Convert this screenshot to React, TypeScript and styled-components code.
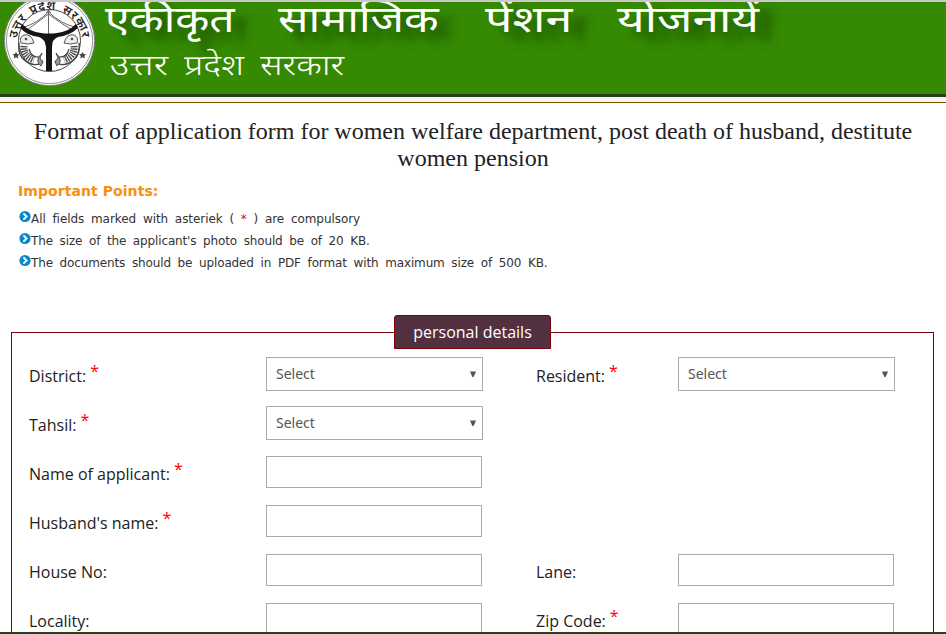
import React from 'react';
import styled, { createGlobalStyle } from 'styled-components';

const GlobalStyle = createGlobalStyle`
  * { box-sizing: border-box; }
  html, body { margin: 0; background: #fff; overflow: hidden; }
`;

const Page = styled.div`
  display: flex;
  flex-direction: column;
  width: 946px;
  height: 634px;
  overflow: hidden;
  background: #fff;
  border-bottom: 2px solid #26401c;
`;

const Header = styled.header`
  display: flex;
  flex: none;
  height: 97px;
  overflow: hidden;
  background: #358a02;
  border-top: 2px solid #cbc8cb;
  border-bottom: 3px solid #26401c;
`;

const Divider = styled.div`
  flex: none;
  height: 6px;
  background: #f8f5ee;
  border-bottom: 1px solid #765800;
`;

const Emblem = styled.svg`
  flex: none;
  width: 100px;
  height: 92px;
`;

const Brand = styled.div`
  display: flex;
  flex-direction: column;
  color: #fff;
  font-family: 'Noto Sans Devanagari', 'Noto Sans', 'Lohit Devanagari', sans-serif;
  white-space: nowrap;
`;

const BrandTitle = styled.div`
  display: flex;
  height: 44px;
  padding-left: 5px;
  font-size: 37px;
  line-height: 43px;
  text-shadow: 11px 10px 8px rgba(18, 60, 0, 0.75);
`;

const Word = styled.span<{ $w: number; $sx: number }>`
  flex: none;
  width: ${(p) => p.$w}px;
  transform: scaleX(${(p) => p.$sx});
  transform-origin: 0 50%;
`;

const BrandSub = styled.div`
  display: flex;
  padding-left: 10px;
  font-size: 28px;
  font-weight: 300;
  line-height: 44px;
`;

const Title = styled.h1`
  flex: none;
  margin: 15px 0 0;
  padding: 0 20px;
  font: 400 24px/27px 'Liberation Serif', serif;
  color: #222;
  text-align: center;
`;

const Notes = styled.section`
  flex: none;
  height: 143px;
  padding: 9px 0 0 18px;
  font-family: 'DejaVu Sans', sans-serif;
  color: #333;
`;

const NotesTitle = styled.h2`
  margin: 0 0 7px;
  font-size: 14px;
  line-height: 20px;
  font-weight: 700;
  letter-spacing: 0.07px;
  color: #f7900f;
`;

const Note = styled.div<{ $ls: number }>`
  display: flex;
  height: 22px;
  font-size: 12px;
  line-height: 22px;
  word-spacing: 3px;
  letter-spacing: ${(p) => p.$ls}px;
  white-space: pre;
`;

const Bullet = styled.svg`
  flex: none;
  width: 13px;
  height: 13px;
  margin-top: 2px;
`;

const Red = styled.span`
  color: #f00;
`;

const Panel = styled.fieldset`
  flex: none;
  width: 923px;
  height: 340px;
  margin: 0 0 0 11px;
  padding: 8px 17px 0;
  border: 1px solid #7a0006;
  font-family: 'Open Sans', sans-serif;
`;

const Legend = styled.legend`
  width: 157px;
  height: 34px;
  margin: 0 auto;
  padding: 0;
  background: #53303f;
  border: 1px solid #7a0006;
  border-radius: 3px 3px 0 0;
  color: #fff;
  font-size: 16px;
  line-height: 32px;
  text-align: center;
`;

const FormRow = styled.div`
  display: grid;
  grid-template-columns: 237px 270px 142px 217px;
  height: 49px;
`;

const Label = styled.label`
  padding-top: 8px;
  font-size: 16px;
  line-height: 22px;
  color: #222;
  white-space: nowrap;
`;

const Star = styled.sup`
  margin-left: 4px;
  font-size: 16px;
  line-height: 0;
  vertical-align: 5px;
  color: #f00;
`;

const Select = styled.div`
  display: flex;
  justify-content: space-between;
  align-items: center;
  width: 217px;
  height: 34px;
  padding: 0 6px 1px 9px;
  border: 1px solid #aaa;
  color: #555;
  font: 14px 'Noto Sans', sans-serif;
`;

const Arrow = styled.svg`
  width: 6px;
  height: 6px;
`;

const Input = styled.input`
  width: 216px;
  height: 32px;
  margin: 1px 0 0;
  padding: 0 9px;
  border: 1px solid #aaa;
  background: #fff;
`;

type FieldDef = { label: string; required?: boolean; kind: 'select' | 'input' };

const rows: FieldDef[][] = [
  [
    { label: 'District:', required: true, kind: 'select' },
    { label: 'Resident:', required: true, kind: 'select' },
  ],
  [{ label: 'Tahsil:', required: true, kind: 'select' }],
  [{ label: 'Name of applicant:', required: true, kind: 'input' }],
  [{ label: "Husband's name:", required: true, kind: 'input' }],
  [
    { label: 'House No:', kind: 'input' },
    { label: 'Lane:', kind: 'input' },
  ],
  [
    { label: 'Locality:', kind: 'input' },
    { label: 'Zip Code:', required: true, kind: 'input' },
  ],
];

const Field = ({ label, required, kind }: FieldDef) => (
  <>
    <Label>
      {label}
      {required && <Star>*</Star>}
    </Label>
    {kind === 'select' ? (
      <Select>
        Select
        <Arrow viewBox="0 0 6 6"><path d="M0 0.5H6L3.6 6H2.4Z" fill="#555" /></Arrow>
      </Select>
    ) : (
      <Input aria-label={label} />
    )}
  </>
);

const NoteIcon = () => (
  <Bullet viewBox="0 0 13 13">
    <circle cx="7" cy="6.5" r="5.6" fill="#0b86cb" />
    <path d="M5.4 3.4L8.6 6.5L5.4 9.6" fill="none" stroke="#fff" strokeWidth="1.9" />
  </Bullet>
);

const Fish = () => (
  <g fill="none" stroke="#444" strokeWidth="0.9">
    <path d="M21 43Q19 37 24 35Q31 33 34 43Q28 45 21 43Z" fill="#eee" />
    <path d="M19 43Q17 57 29 63Q38 67 43 61" strokeWidth="1.4" />
    <path d="M24 46Q23 56 34 60" strokeWidth="7" strokeDasharray="1.3 1" />
    <path d="M29 49Q31 58 40 57" strokeWidth="1.2" />
    <path d="M41 66Q34 61 42 53L40 58L43 62Z" fill="#999" />
    <circle cx="26" cy="39" r="0.9" fill="#222" />
  </g>
);

const StateEmblem = () => (
  <Emblem viewBox="0 2 100 92">
    <defs>
      <path id="arc" d="M17 46A32.7 32.7 0 1 1 82 46" />
    </defs>
    <circle cx="49.5" cy="40.5" r="45.2" fill="#fff" stroke="#777" strokeWidth="1" />
    <circle cx="49.5" cy="40.5" r="43.2" fill="#fff" stroke="#777" strokeWidth="0.8" />
    <circle cx="49.5" cy="40.5" r="31" fill="#fff" stroke="#444" strokeWidth="1" />
    <text
      fontFamily="'Noto Sans Devanagari', 'Noto Sans', 'Lohit Devanagari', sans-serif"
      fontSize="12"
      fontWeight="600"
      wordSpacing="2"
      letterSpacing="0.8"
      fill="#2a2525"
    >
      <textPath href="#arc" startOffset="50%" textAnchor="middle">उत्तर प्रदेश सरकार</textPath>
    </text>
    <path d="M24 27Q36 24 48.5 12Q61 24 75 27M27 30Q38 22 48.5 14Q59 22 72 30M48.5 10V34M46.5 13L48.5 9L50.5 13" fill="none" stroke="#666" strokeWidth="1" />
    <Fish />
    <g transform="translate(98 0) scale(-1 1)"><Fish /></g>
    <path d="M22 24Q30 32 41 33Q49 34 57 33Q68 32 76 24L78 28Q69 36 58 37Q52 39 52 47V71H46V47Q45 39 39 37Q28 36 20 28Z" fill="#181416" />
    <path d="M16 52l1.2 2 2.4.3-1.8 1.7.5 2.5-2.3-1.3-2.2 1.3.5-2.5-1.7-1.7 2.3-.3z" fill="#444" />
    <path d="M82.5 52l1.2 2 2.4.3-1.8 1.7.5 2.5-2.3-1.3-2.2 1.3.5-2.5-1.7-1.7 2.3-.3z" fill="#444" />
  </Emblem>
);

export default function App() {
  return (
    <>
      <GlobalStyle />
      <Page>
        <Header>
          <StateEmblem />
          <Brand>
            <BrandTitle>
              <Word $w={173} $sx={1.2}>एकीकृत</Word>
              <Word $w={207} $sx={1.22}>सामाजिक</Word>
              <Word $w={132} $sx={1.31}>पेंशन</Word>
              <Word $w={160} $sx={1.29}>योजनायें</Word>
            </BrandTitle>
            <BrandSub>
              <Word $w={74} $sx={1.32}>उत्तर</Word>
              <Word $w={76} $sx={1.26}>प्रदेश</Word>
              <Word $w={100} $sx={1.26}>सरकार</Word>
            </BrandSub>
          </Brand>
        </Header>
        <Divider />
        <Title>
          Format of application form for women welfare department, post death of husband, destitute
          women pension
        </Title>
        <Notes>
          <NotesTitle>Important Points:</NotesTitle>
          <Note $ls={-0.06}>
            <NoteIcon />
            <span>All fields marked with asteriek ( <Red>*</Red> ) are compulsory</span>
          </Note>
          <Note $ls={-0.14}>
            <NoteIcon />
            <span>The size of the applicant's photo should be of 20 KB.</span>
          </Note>
          <Note $ls={-0.13}>
            <NoteIcon />
            <span>The documents should be uploaded in PDF format with maximum size of 500 KB.</span>
          </Note>
        </Notes>
        <Panel>
          <Legend>personal details</Legend>
          {rows.map((fields, i) => (
            <FormRow key={i}>
              {fields.map((f) => <Field key={f.label} {...f} />)}
            </FormRow>
          ))}
        </Panel>
      </Page>
    </>
  );
}
